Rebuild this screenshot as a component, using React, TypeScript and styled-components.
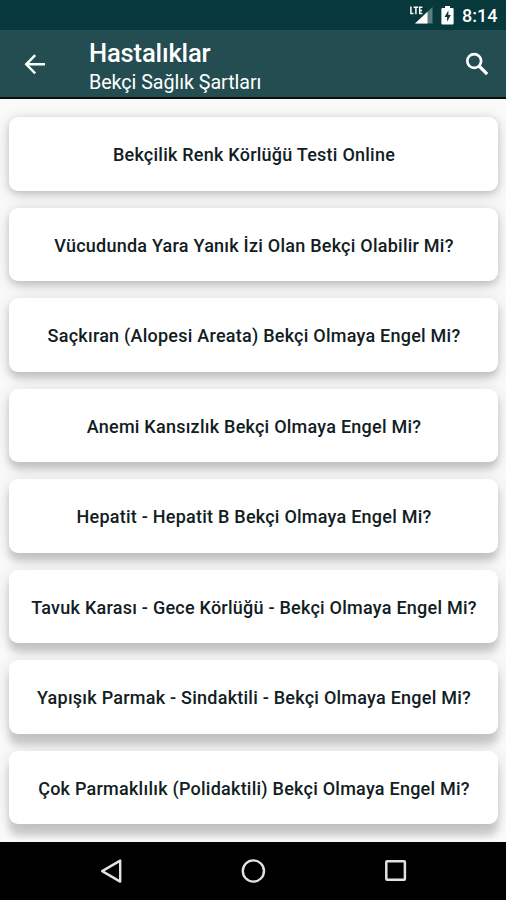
import React from "react";
import styled, { createGlobalStyle } from "styled-components";

const GlobalStyle = createGlobalStyle`
  * { box-sizing: border-box; }
  html, body { margin: 0; padding: 0; overflow: hidden; }
  body { font-family: Roboto, "Noto Sans", sans-serif; }
`;

const Screen = styled.div`
  display: flex;
  flex-direction: column;
  width: 506px;
  height: 900px;
  overflow: hidden;
  background: #fafafa;
`;

const StatusBar = styled.div`
  flex: none;
  display: flex;
  align-items: center;
  justify-content: flex-end;
  height: 30px;
  padding-right: 9px;
  background: #07383b;
  color: #fff;
`;

const SignalIcon = styled.svg`
  width: 24px;
  height: 30px;
  margin-right: 8px;
`;

const BatteryIcon = styled.svg`
  width: 13px;
  height: 30px;
  margin-right: 8px;
`;

const Clock = styled.span`
  width: 35px;
  font-size: 18px;
  font-weight: 500;
  line-height: 30px;
  padding-top: 1px;
  white-space: nowrap;
`;

const AppBar = styled.header`
  flex: none;
  display: flex;
  align-items: center;
  height: 69px;
  padding: 0 15px 0 21px;
  background: #234d50;
  border-bottom: 2px solid #0a0c0d;
  color: #fff;
`;

const IconButton = styled.button`
  display: grid;
  place-items: center;
  width: 28px;
  height: 28px;
  padding: 0;
  border: 0;
  background: none;
  color: #fff;
`;

const Heading = styled.div`
  flex: 1;
  margin-left: 40px;
  padding-top: 7px;
`;

const Title = styled.h1`
  margin: 0;
  font-size: 25.6px;
  font-weight: 500;
  letter-spacing: -0.18px;
  line-height: 30px;
`;

const Subtitle = styled.p`
  margin: 0;
  font-size: 19.7px;
  letter-spacing: -0.05px;
  line-height: 29px;
  white-space: nowrap;
`;

const List = styled.main`
  flex: 1;
  min-height: 0;
  display: flex;
  flex-direction: column;
  gap: 17px;
  padding: 18px 8px 0 9px;
  overflow: hidden;
`;

const Card = styled.button<{ $drop: number }>`
  flex: none;
  display: flex;
  align-items: center;
  justify-content: center;
  height: 73.5px;
  padding: 2px 0 0 1px;
  border: 0;
  border-radius: 9px;
  background: #fff;
  color: #11201f;
  font-family: inherit;
  font-size: 18px;
  font-weight: 500;
  letter-spacing: 0.24px;
  white-space: nowrap;
  box-shadow:
    0 ${(p) => p.$drop}px 7px rgba(0, 0, 0, 0.16),
    0 3px 18px rgba(0, 0, 0, 0.13);
`;

const NavBar = styled.nav`
  flex: none;
  display: flex;
  justify-content: space-between;
  align-items: center;
  height: 58px;
  padding: 0 96px;
  background: #000;
  color: #e2e2e2;
`;

const topics = [
  "Bekçilik Renk Körlüğü Testi Online",
  "Vücudunda Yara Yanık İzi Olan Bekçi Olabilir Mi?",
  "Saçkıran (Alopesi Areata) Bekçi Olmaya Engel Mi?",
  "Anemi Kansızlık Bekçi Olmaya Engel Mi?",
  "Hepatit - Hepatit B Bekçi Olmaya Engel Mi?",
  "Tavuk Karası - Gece Körlüğü - Bekçi Olmaya Engel Mi?",
  "Yapışık Parmak - Sindaktili - Bekçi Olmaya Engel Mi?",
  "Çok Parmaklılık (Polidaktili) Bekçi Olmaya Engel Mi?",
];

export default function App() {
  return (
    <Screen>
      <GlobalStyle />
      <StatusBar>
        <SignalIcon viewBox="0 0 24 30" fill="none">
          <path d="M23.5 7v16.5H6z" fill="#fff" fillOpacity="0.35" />
          <path d="M18.5 11.7v11.8H6z" fill="#fff" />
          <path
            d="M1.9 6.5v7.1h2.6M4.6 7.3h4.6M6.9 7.3v6.9M13.4 7.3h-2.7v6.3h2.7M10.7 10.4h2.4"
            stroke="#07383b"
            strokeWidth="3.2"
          />
          <path
            d="M1.9 6.5v7.1h2.6M4.6 7.3h4.6M6.9 7.3v6.9M13.4 7.3h-2.7v6.3h2.7M10.7 10.4h2.4"
            stroke="#fff"
            strokeWidth="1.5"
          />
        </SignalIcon>
        <BatteryIcon viewBox="0 0 13 30">
          <path
            d="M4 6h5v2h2.6q1 0 1 1v14.5q0 1-1 1H1.4q-1 0-1-1V9q0-1 1-1H4z"
            fill="#fff"
          />
          <path d="M7.4 10.5L3.5 17h2.6v4.7L9.8 15H7.4z" fill="#07383b" />
        </BatteryIcon>
        <Clock>8:14</Clock>
      </StatusBar>
      <AppBar>
        <IconButton aria-label="Geri">
          <svg width="28" height="28" viewBox="0 0 28 28" fill="none" stroke="currentColor" strokeWidth="2.4">
            <path d="M24 14.3H6M14.2 5.2L5.2 14.3l9 9.1" />
          </svg>
        </IconButton>
        <Heading>
          <Title>Hastalıklar</Title>
          <Subtitle>Bekçi Sağlık Şartları</Subtitle>
        </Heading>
        <IconButton aria-label="Ara">
          <svg width="28" height="28" viewBox="0 0 28 28" fill="none" stroke="currentColor" strokeWidth="2.7">
            <circle cx="11.2" cy="11" r="6.9" />
            <path d="M16 16l8.2 8.2" strokeWidth="3.2" />
          </svg>
        </IconButton>
      </AppBar>
      <List>
        {topics.map((topic, i) => (
          <Card key={topic} $drop={2.5 + i * 1.3}>
            {topic}
          </Card>
        ))}
      </List>
      <NavBar>
        <svg width="30" height="30" viewBox="0 0 30 30" fill="none" stroke="currentColor" strokeWidth="2.4" strokeLinejoin="round">
          <path d="M24.2 4.6v21L6.2 15.1z" />
        </svg>
        <svg width="30" height="30" viewBox="0 0 30 30" fill="none" stroke="currentColor" strokeWidth="2.4">
          <circle cx="15.4" cy="15" r="10.6" />
        </svg>
        <svg width="30" height="30" viewBox="0 0 30 30" fill="none" stroke="currentColor" strokeWidth="2.5">
          <rect x="6.3" y="5.2" width="18.6" height="18.6" rx="0.8" />
        </svg>
      </NavBar>
    </Screen>
  );
}
